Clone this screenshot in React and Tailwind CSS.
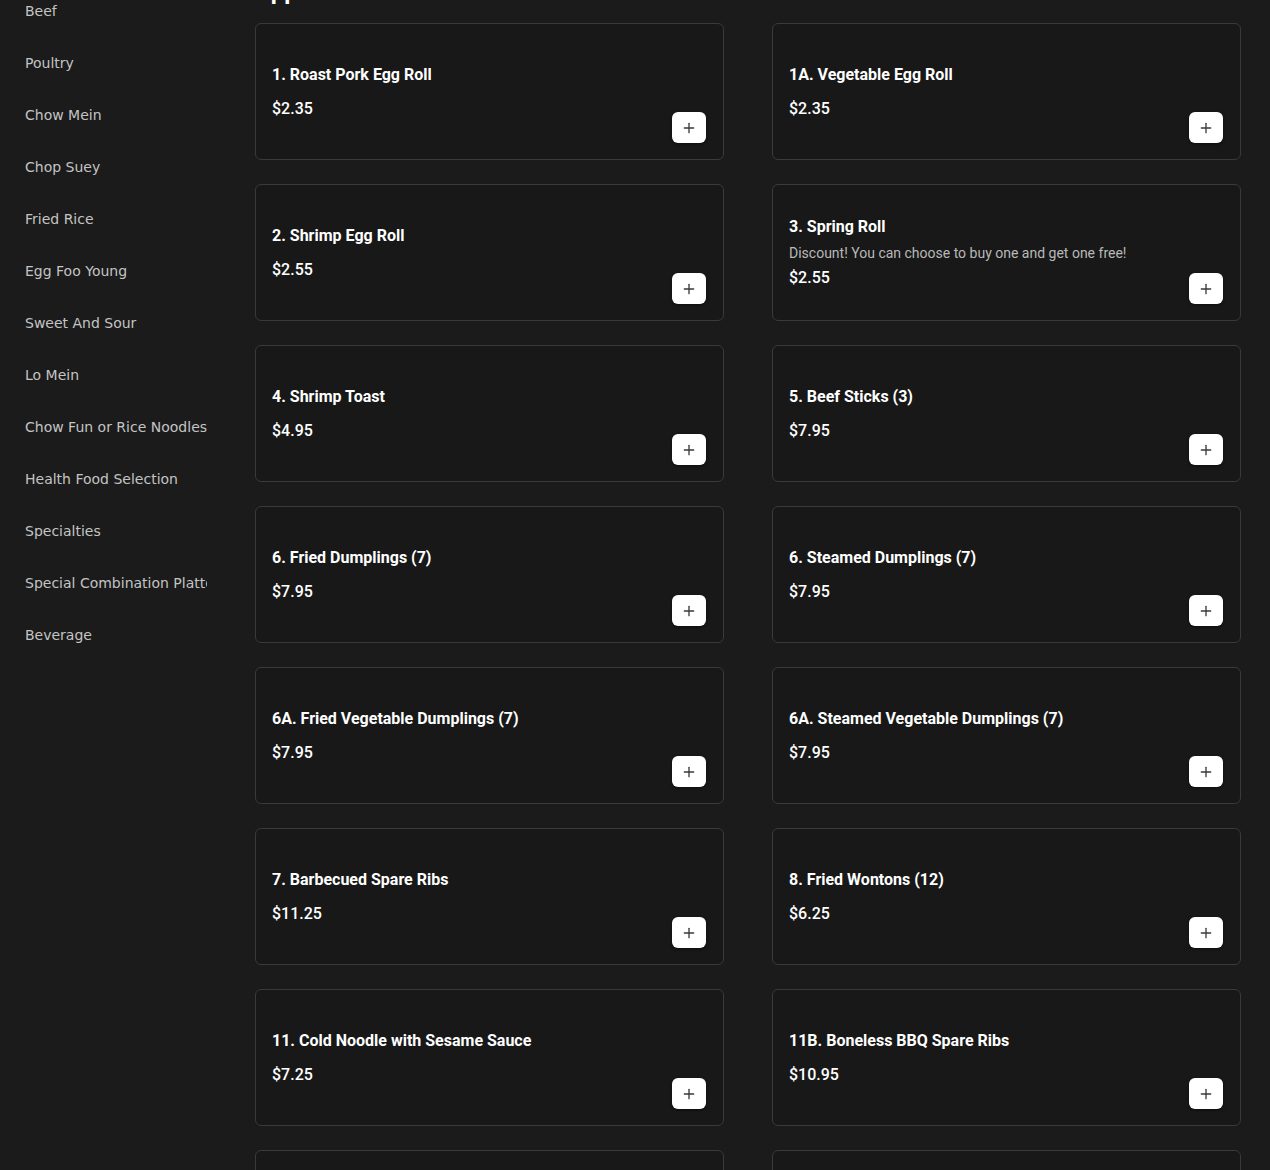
import React from 'react';
import { Plus } from 'lucide-react';

const categories = [
  'Beef',
  'Poultry',
  'Chow Mein',
  'Chop Suey',
  'Fried Rice',
  'Egg Foo Young',
  'Sweet And Sour',
  'Lo Mein',
  'Chow Fun or Rice Noodles',
  'Health Food Selection',
  'Specialties',
  'Special Combination Platters',
  'Beverage',
];

const items = [
  { name: '1. Roast Pork Egg Roll', price: '$2.35' },
  { name: '1A. Vegetable Egg Roll', price: '$2.35' },
  { name: '2. Shrimp Egg Roll', price: '$2.55' },
  { name: '3. Spring Roll', desc: 'Discount! You can choose to buy one and get one free!', price: '$2.55' },
  { name: '4. Shrimp Toast', price: '$4.95' },
  { name: '5. Beef Sticks (3)', price: '$7.95' },
  { name: '6. Fried Dumplings (7)', price: '$7.95' },
  { name: '6. Steamed Dumplings (7)', price: '$7.95' },
  { name: '6A. Fried Vegetable Dumplings (7)', price: '$7.95' },
  { name: '6A. Steamed Vegetable Dumplings (7)', price: '$7.95' },
  { name: '7. Barbecued Spare Ribs', price: '$11.25' },
  { name: '8. Fried Wontons (12)', price: '$6.25' },
  { name: '11. Cold Noodle with Sesame Sauce', price: '$7.25' },
  { name: '11B. Boneless BBQ Spare Ribs', price: '$10.95' },
  { name: '12. Pu Pu Platter (for 2)', price: '$15.95' },
  { name: '13. Crab Rangoon (8)', price: '$7.25' },
];

const MenuCard = ({ item }) => (
  <div className="h-[137px] flex justify-between rounded-md border border-[#3a3a3a] bg-[#181818] pl-4 pr-[17px] py-4">
    <div className="self-center flex flex-col">
      <h3 className="text-base leading-6 font-bold text-white">{item.name}</h3>
      {item.desc && (
        <p className="mt-1 text-sm leading-5 text-[#b8b8b8]">{item.desc}</p>
      )}
      <span className={`${item.desc ? 'mt-[3px]' : 'mt-2.5'} text-base leading-6 font-medium text-white`}>
        {item.price}
      </span>
    </div>
    <button className="self-end w-[34px] h-[31px] flex items-center justify-center rounded-md bg-white shadow-[0_1px_3px_rgba(0,0,0,0.5)]">
      <Plus className="w-4 h-4 text-[#3a3a3a]" strokeWidth={2} />
    </button>
  </div>
);

export default function App() {
  return (
    <div className="h-[1170px] overflow-hidden flex bg-[#1b1b1b] font-['Roboto',sans-serif]">
      <aside className="w-[207px] shrink-0 overflow-hidden font-['DejaVu_Sans',sans-serif]">
        <ul className="-mt-[15px]">
          {categories.map((c) => (
            <li key={c} className="h-[52px] flex items-center pl-[25px] text-sm whitespace-nowrap text-[#c4c4c4]">
              {c}
            </li>
          ))}
        </ul>
      </aside>
      <main className="flex-1 pl-12 pr-[29px] -mt-[25px]">
        <h2 className="text-2xl leading-8 font-bold text-white mb-4">Appetizers</h2>
        <div className="grid grid-cols-2 gap-x-12 gap-y-6">
          {items.map((item) => (
            <MenuCard key={item.name} item={item} />
          ))}
        </div>
      </main>
    </div>
  );
}
